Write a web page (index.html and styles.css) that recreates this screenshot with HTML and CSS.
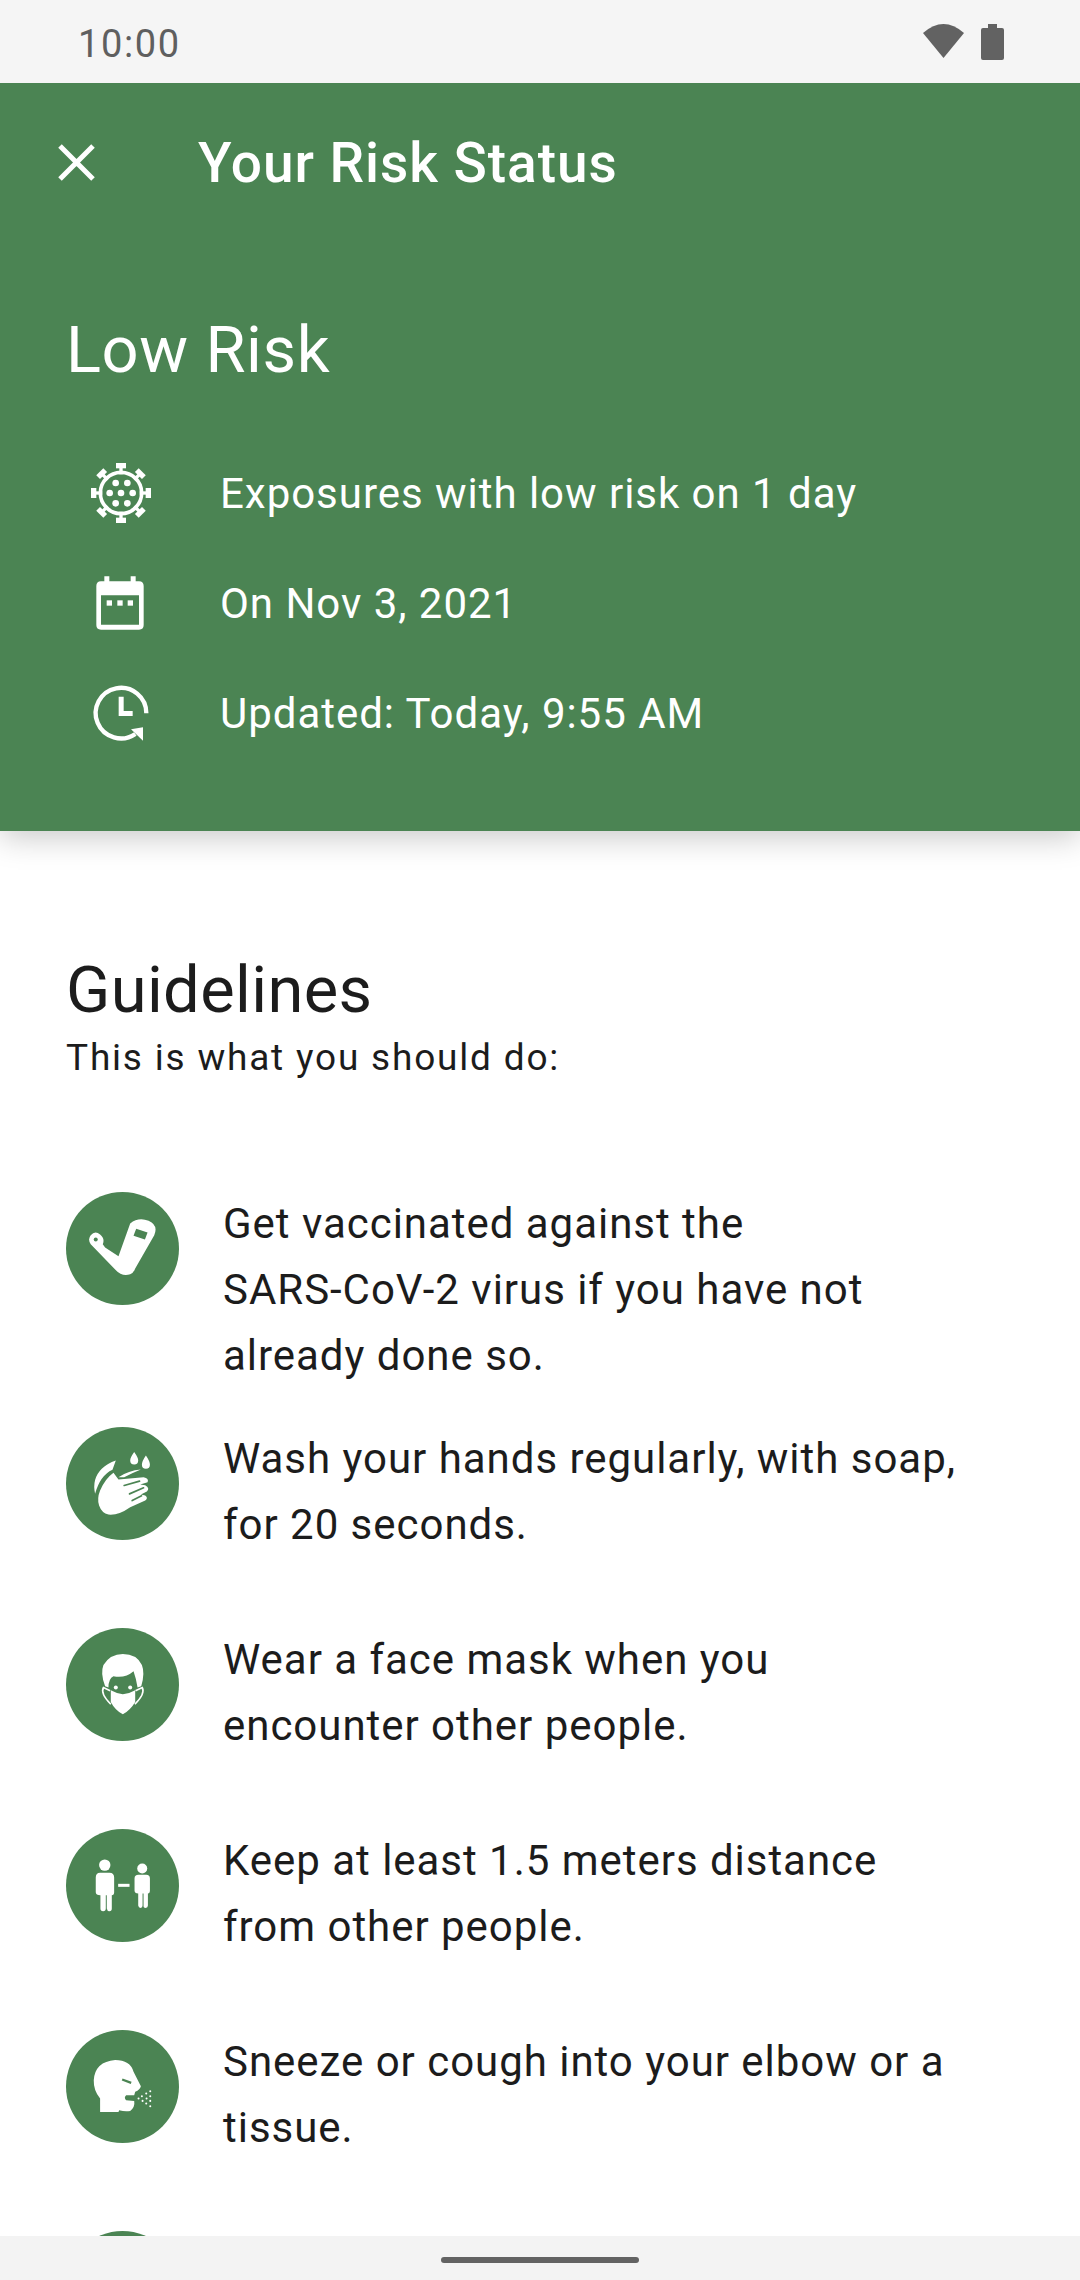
FILE: index.html
```html
<!DOCTYPE html>
<html lang="en">
<head>
  <meta charset="UTF-8">
  <title>Your Risk Status</title>
  <link rel="stylesheet" href="styles.css">
</head>
<body>
<div class="phone">
  <div class="status-bar">
    <span class="clock">10:00</span>
    <div class="status-icons">
      <svg class="wifi" viewBox="0 0 41 34"><path d="M0 9Q20.500-9 41 9L20.500 34Z"/></svg>
      <svg class="battery" viewBox="0 0 23 36"><path d="M7 0h9v4h5q2 0 2 2v28q0 2-2 2H2q-2 0-2-2V6q0-2 2-2h5Z"/></svg>
    </div>
  </div>

  <div class="content">
    <header class="hero">
      <div class="toolbar">
        <svg class="close" viewBox="0 0 37 37"><path d="M2 2L35 35M35 2L2 35"/></svg>
        <h1>Your Risk Status</h1>
      </div>
      <h2>Low Risk</h2>
      <div class="fact">
        <svg viewBox="83 51 198 198">
          <defs>
            <g id="spike"><rect x="167" y="60" width="30" height="16"/><rect x="177" y="70" width="10" height="24"/></g>
          </defs>
          <use href="#spike"/>
          <use href="#spike" transform="rotate(45 182 150)"/>
          <use href="#spike" transform="rotate(90 182 150)"/>
          <use href="#spike" transform="rotate(135 182 150)"/>
          <use href="#spike" transform="rotate(180 182 150)"/>
          <use href="#spike" transform="rotate(225 182 150)"/>
          <use href="#spike" transform="rotate(270 182 150)"/>
          <use href="#spike" transform="rotate(315 182 150)"/>
          <circle cx="182" cy="150" r="62" fill="none" stroke="#fff" stroke-width="11"/>
          <circle cx="166" cy="120" r="10"/><circle cx="201" cy="120" r="10"/>
          <circle cx="148" cy="150" r="10"/><circle cx="182" cy="150" r="10"/><circle cx="217" cy="150" r="10"/>
          <circle cx="166" cy="181" r="10"/><circle cx="201" cy="181" r="10"/>
        </svg>
        <span>Exposures with low risk on 1 day</span>
      </div>
      <div class="fact">
        <svg viewBox="83 381 198 198">
          <path fill-rule="evenodd" d="M132 400h15v15h64v-15h15v15h10q14 0 14 14v117q0 14-14 14H122q-14 0-14-14V429q0-14 14-14h10ZM122 457v88h114v-88Z"/>
          <rect x="139" y="472" width="16" height="16"/><rect x="171" y="472" width="16" height="16"/><rect x="202" y="472" width="16" height="16"/>
        </svg>
        <span>On Nov 3, 2021</span>
      </div>
      <div class="fact">
        <svg viewBox="83 710 198 198">
          <path d="M258 810A76 76 0 1 0 225 872" fill="none" stroke="#fff" stroke-width="13"/>
          <polygon points="248,852 248,892 212,858"/>
          <path d="M175 760h15v43h27v15h-42Z"/>
        </svg>
        <span>Updated: Today, 9:55 AM</span>
      </div>
    </header>

    <section class="guidelines">
      <h3>Guidelines</h3>
      <p class="lead">This is what you should do:</p>

      <div class="tip">
        <svg class="badge" viewBox="48 66 338 338">
          <circle class="disc" cx="217" cy="235" r="169"/>
          <path d="M122 222L195 298Q215 320 240 312Q250 308 255 295L312 195Q325 165 295 152Q265 140 240 160L205 258L165 232L158 222Q165 205 150 193Q135 180 122 195Q112 208 122 222Z"/>
          <circle class="cut" cx="137" cy="208" r="6"/>
          <polygon class="cut" points="258,176 292,187 284,208 250,197"/>
        </svg>
        <p>Get vaccinated against the<br>SARS-CoV-2 virus if you have not already done so.</p>
      </div>
      <div class="tip">
        <svg class="badge" viewBox="48 50 338 338">
          <circle class="disc" cx="217" cy="219" r="169"/>
          <path d="M252 125Q264 142 264 150A12 12 0 0 1 240 150Q240 142 252 125ZM287 135Q299 152 299 163A12 12 0 0 1 275 163Q275 152 287 135Z"/>
          <path d="M197 150L187 178Q150 195 135 250Q125 205 155 175Q172 158 197 150Z"/>
          <path d="M205 200Q235 180 272 177Q245 188 222 200Z"/>
          <path d="M147 285Q140 265 150 240Q165 205 190 187L205 207L280 200Q297 203 292 215L270 222L285 224Q300 232 290 243L272 252L285 255Q295 262 285 270L240 290Q205 315 175 312Q155 308 147 285Z"/>
          <path class="gap" d="M222 225L268 212M238 250L280 232M246 270L274 256"/>
        </svg>
        <p>Wash your hands regularly, with soap, for 20 seconds.</p>
      </div>
      <div class="tip">
        <svg class="badge" viewBox="48 54 338 338">
          <circle class="disc" cx="217" cy="223" r="169"/>
          <path d="M165 228Q150 190 160 165Q180 132 218 132Q260 132 275 165Q285 190 273 228L262 232Q258 205 250 183Q225 205 190 198Q175 205 175 232Z"/>
          <circle cx="197" cy="232" r="6"/><circle cx="240" cy="232" r="6"/>
          <path d="M182 240Q200 250 218 252Q238 250 255 240V275Q240 300 218 312Q195 300 182 275Z"/>
          <path class="strap" d="M180 242L160 232Q150 250 182 282M256 242L276 232Q286 250 254 282"/>
        </svg>
        <p>Wear a face mask when you encounter other people.</p>
      </div>
      <div class="tip">
        <svg class="badge" viewBox="48 57 338 338">
          <circle class="disc" cx="217" cy="226" r="169"/>
          <circle cx="164" cy="165" r="17"/>
          <path d="M150 188h28q14 0 14 14v44q0 9-7 9v40q0 8-7 8t-8-8v-40h-3v40q0 8-8 8t-8-8v-40q-14 0-14-9v-44q0-14 13-14Z"/>
          <rect x="204" y="221" width="34" height="9"/>
          <circle cx="276" cy="175" r="15"/>
          <path d="M265 194h23q11 0 11 11v36q0 9-6 9v36q0 7-7 7t-6-7v-36h-3v36q0 7-6 7t-7-7v-36q-11 0-11-9v-36q0-11 12-11Z"/>
        </svg>
        <p>Keep at least 1.5 meters distance from other people.</p>
      </div>
      <div class="tip">
        <svg class="badge" viewBox="48 60 338 338">
          <circle class="disc" cx="217" cy="229" r="169"/>
          <path d="M150 305V265Q130 240 131 210Q135 155 195 150Q240 150 250 185L272 228Q270 238 255 245L252 255L228 255Q220 262 228 270L252 272Q255 290 240 302Q225 305 207 300L205 305Z"/>
          <path class="eye" d="M216 208L243 218"/>
          <g>
            <circle cx="265" cy="265" r="3"/><circle cx="275" cy="258" r="3"/><circle cx="288" cy="250" r="3"/><circle cx="300" cy="243" r="3"/>
            <circle cx="277" cy="272" r="3"/><circle cx="289" cy="265" r="3"/><circle cx="300" cy="258" r="3"/>
            <circle cx="288" cy="280" r="3"/><circle cx="300" cy="272" r="3"/><circle cx="300" cy="288" r="3"/>
          </g>
        </svg>
        <p>Sneeze or cough into your elbow or a tissue.</p>
      </div>
      <div class="tip">
        <svg class="badge" viewBox="48 66 338 338"><circle class="disc" cx="217" cy="235" r="169"/></svg>
      </div>
    </section>
  </div>

  <div class="nav-bar"><span class="pill"></span></div>
</div>
</body>
</html>
```
FILE: styles.css
```css
* {
  box-sizing: border-box;
}

body {
  margin: 0;
  font-family: Roboto, sans-serif;
  background-color: #fff;
}

h1, h2, h3, p {
  margin: 0;
  font-weight: 400;
}

.phone {
  display: flex;
  flex-direction: column;
  width: 1080px;
  height: 2280px;
  overflow: hidden;
}

.status-bar {
  display: flex;
  justify-content: space-between;
  align-items: center;
  flex: none;
  height: 83px;
  padding: 5px 76px 0 78px;
  background-color: #f5f5f5;
  color: #5f5f5f;
}

.clock {
  font-size: 38px;
  letter-spacing: 1.6px;
}

.status-icons {
  display: flex;
  align-items: flex-start;
  gap: 17px;
  height: 36px;
  margin-top: -5px;
}

.status-icons svg {
  fill: #626262;
}

.wifi {
  width: 41px;
  height: 34px;
}

.battery {
  width: 23px;
  height: 36px;
}

.content {
  flex: 1;
  min-height: 0;
  overflow: hidden;
}

.hero {
  position: relative;
  height: 748px;
  padding-top: 52px;
  background-color: #4b8453;
  color: #fff;
  box-shadow: 0 6px 30px rgba(0,0,0,0.22);
}

.toolbar {
  display: flex;
  align-items: center;
  height: 54px;
  padding-left: 58px;
}

.close {
  width: 37px;
  height: 37px;
  margin-right: 103px;
  fill: none;
  stroke: #fff;
  stroke-width: 5;
}

.toolbar h1 {
  padding-top: 2px;
  font-size: 55px;
  font-weight: 500;
  letter-spacing: 0.95px;
}

.hero h2 {
  margin: 120px 0 47px 66px;
  font-size: 65px;
  line-height: 82px;
  letter-spacing: 0.6px;
}

.fact {
  display: flex;
  align-items: center;
  height: 110px;
  padding-left: 88px;
  font-size: 42px;
  letter-spacing: 0.97px;
}

.fact svg {
  flex: none;
  width: 66px;
  height: 66px;
  margin-right: 66px;
  fill: #fff;
}

.guidelines {
  padding: 116px 67px 0 66px;
  color: #1c1c1c;
}

.guidelines h3 {
  font-size: 65px;
  line-height: 86px;
  letter-spacing: 0.4px;
}

.lead {
  font-size: 37px;
  line-height: 50px;
  letter-spacing: 1.8px;
  margin-bottom: 109px;
}

.tip {
  display: flex;
  align-items: flex-start;
  min-height: 162px;
  margin-bottom: 39px;
  font-size: 42px;
  line-height: 66px;
  letter-spacing: 0.97px;
}

.tip p {
  margin: -1px 0;
  max-width: 745px;
}

.badge {
  flex: none;
  width: 113px;
  height: 113px;
  margin-right: 44px;
  fill: #fff;
}

.disc {
  fill: #4b8453;
}

.cut {
  fill: #4b8453;
}

.gap {
  fill: none;
  stroke: #4b8453;
  stroke-width: 5;
  stroke-linecap: round;
}

.strap {
  fill: none;
  stroke: #fff;
  stroke-width: 5;
}

.eye {
  fill: none;
  stroke: #4b8453;
  stroke-width: 7;
}

.nav-bar {
  display: flex;
  justify-content: center;
  flex: none;
  height: 44px;
  padding-top: 21px;
  background-color: #f3f3f3;
}

.pill {
  width: 198px;
  height: 6px;
  border-radius: 3px;
  background-color: #626262;
}
```
